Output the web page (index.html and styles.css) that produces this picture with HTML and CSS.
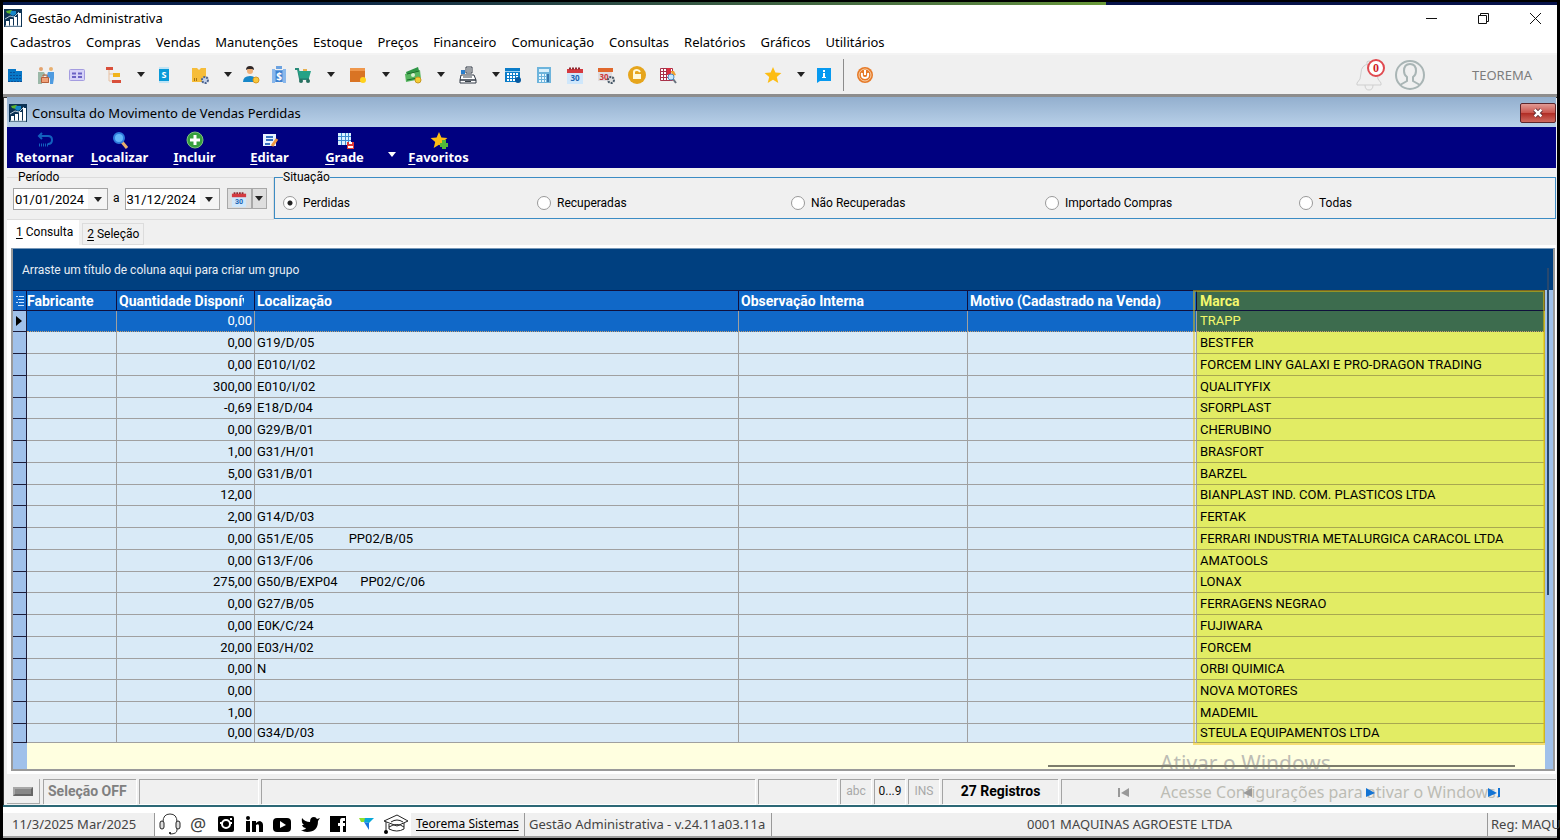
FILE: index.html
```
<!DOCTYPE html>
<html lang="pt-BR">
  <head>
    <meta charset="UTF-8" />
    <meta name="viewport" content="width=device-width, initial-scale=1.0" />
    <title>Gestão Administrativa</title>
    <link rel="stylesheet" href="styles.css">
  </head>
  <body>
    <svg class="defs" aria-hidden="true">
      <symbol id="logo" viewBox="0 0 18 18">
        <path fill="#0d3354" d="M0 0h18v18H0z"/>
        <path fill="#5db52d" d="M2 2l5-1 3 2-3 2-4-1z"/>
        <path fill="#1687c8" d="M7 2h5v3l-3 2-3-2z"/>
        <path fill="#fff" d="M2 12h3v5H2zM6 10h3v7H6zM10 8h3v9h-3zM14 4h3v13h-3z"/>
        <path fill="none" stroke="#b8cad8" d="M1 10l5-3 4 1 5-5M1 17h16"/>
      </symbol>
      <symbol id="calendar" viewBox="0 0 18 18">
        <path fill="#cfe7fb" d="M1 4h16v14H1z"/>
        <path fill="#d43a40" d="M1 3h16v4H1z"/>
        <path stroke="#8e2b32" stroke-width="2" stroke-dasharray="2 1" d="M3 2.500h12"/>
        <text x="9" y="15" text-anchor="middle" font-size="8" font-weight="700" fill="#1c64b4">30</text>
      </symbol>
      <symbol id="star" viewBox="0 0 18 18">
        <path fill="#fdbd14" d="M9 1l2.400 5.600 6 .5-4.600 4 1.500 6L9 13.800 3.700 17l1.500-5.900-4.600-4 6-.5z"/>
      </symbol>
    </svg>

    <div class="app">
      <header class="title-bar">
        <svg class="logo"><use href="#logo"/></svg>
        <h1>Gestão Administrativa</h1>
        <div class="window-buttons">
          <button type="button" aria-label="Minimizar"><svg viewBox="0 0 13 13"><path d="M1 6.500h11"/></svg></button>
          <button type="button" aria-label="Restaurar"><svg viewBox="0 0 13 13"><path d="M1.500 3.500h8v8h-8zM3.500 3.500v-2h8v8h-2"/></svg></button>
          <button type="button" aria-label="Fechar"><svg viewBox="0 0 13 13"><path d="M1 1l11 11M12 1L1 12"/></svg></button>
        </div>
      </header>

      <nav class="menu">
        <a href="#">Cadastros</a>
        <a href="#">Compras</a>
        <a href="#">Vendas</a>
        <a href="#">Manutenções</a>
        <a href="#">Estoque</a>
        <a href="#">Preços</a>
        <a href="#">Financeiro</a>
        <a href="#">Comunicação</a>
        <a href="#">Consultas</a>
        <a href="#">Relatórios</a>
        <a href="#">Gráficos</a>
        <a href="#">Utilitários</a>
      </nav>

      <div class="toolbar">
        <button type="button" class="tool" aria-label="Empresas">
          <svg viewBox="0 0 18 18"><path fill="#0878c8" d="M2 3h8v2h6v11H2z"/><path stroke="#0b4f96" stroke-dasharray="2 1" d="M4 6.500h5M4 9.500h11M4 12.500h11M2 15.500h14"/></svg>
        </button>
        <button type="button" class="tool" aria-label="Clientes">
          <svg viewBox="0 0 18 18"><circle cx="4" cy="3" r="2" fill="#e3a36f"/><circle cx="14" cy="3" r="2" fill="#e8b070"/><path fill="#9bb8a8" d="M1 6h6l2 4H5v8H1z"/><path fill="#4f9be0" d="M11 6h6v6l-1 6h-3v-6l-3 1V9z"/><path fill="#f0a078" d="M4 11h8v6H4z"/><path fill="none" stroke="#b4603c" d="M6 11V9h4v2M4.500 11.500h7v5h-7z"/></svg>
        </button>
        <button type="button" class="tool gap-large" aria-label="Contatos">
          <svg viewBox="0 0 18 18"><rect x="1.500" y="3.500" width="15" height="11" rx="1" fill="#d6d2f8" stroke="#a49ce0"/><path stroke="#6b62c4" stroke-width="2" d="M4 7.500h4M10 7.500h4M4 11h4M10 11h4"/></svg>
        </button>
        <button type="button" class="tool tool-menu gap-small" aria-label="Organograma">
          <svg viewBox="0 0 18 18"><path fill="none" stroke="#e8c0a0" d="M5 4v11h5M5 8h4"/><path fill="#d94f3a" d="M2 1h7v3H2zM8 14h9v3H8z"/><path fill="#f0b41c" d="M9 7h7v4H9z"/></svg><i class="arrow"></i>
        </button>
        <button type="button" class="tool gap-large" aria-label="Serviços">
          <svg viewBox="0 0 18 18"><path fill="#0a9ad8" d="M4 1h10v16H4z"/><path fill="#bfe4f6" d="M4 1h10v2H4zM4 15h10v2H4z"/><text x="9" y="12" text-anchor="middle" font-size="9" font-weight="700" fill="#fff">S</text></svg>
        </button>
        <button type="button" class="tool tool-menu gap-small" aria-label="Produtos">
          <svg viewBox="0 0 18 18"><path fill="#f6bd3a" d="M1 2h5l2 2 2-2h5v14H1z"/><path fill="#a67412" d="M3 12h1v3H3zM5 12h1v3H5z"/><circle cx="14" cy="14" r="3" fill="#c6d4ec" stroke="#4c6490" stroke-width="2" stroke-dasharray="2 1"/></svg><i class="arrow"></i>
        </button>
        <button type="button" class="tool gap-medium" aria-label="Vendedores">
          <svg viewBox="0 0 18 18"><circle cx="8" cy="5" r="3" fill="#f0b078"/><path fill="#302828" d="M4 4q0-4 4-4t4 4l-2-1H6z"/><path fill="#1787c8" d="M1 16q0-6 7-6 5 0 6 4v2z"/><circle cx="14" cy="14" r="3" fill="#f8c83c" stroke="#d89820"/></svg>
        </button>
        <button type="button" class="tool gap-small" aria-label="Contas">
          <svg viewBox="0 0 18 18"><path fill="#6ba2e0" d="M6 0h6v3H6zM3 4h12v12H3z"/><path fill="#3f82d0" d="M6 5h6v11H6z"/><path fill="#8ab8ec" d="M2 3h3v14H2zM13 3h3v14h-3z"/><text x="9" y="14" text-anchor="middle" font-size="10" font-weight="700" fill="#fff">$</text></svg>
        </button>
        <button type="button" class="tool tool-menu gap-medium" aria-label="Vendas">
          <svg viewBox="0 0 18 18"><path fill="none" stroke="#278a78" stroke-width="2" d="M1 3h3l2 10h9"/><path fill="#26a286" d="M4 5h13l-2 7H6z"/><path stroke="#e8b050" stroke-width="2" d="M9 4h4"/><circle cx="7" cy="15" r="2" fill="#277060"/><circle cx="14" cy="15" r="2" fill="#277060"/></svg><i class="arrow"></i>
        </button>
        <button type="button" class="tool tool-menu gap-medium" aria-label="Estoque">
          <svg viewBox="0 0 18 18"><path fill="#d97424" d="M1 2h15v14H1z"/><path fill="#ef974c" d="M1 2h15v3H1z"/><circle cx="14" cy="14" r="3" fill="#ffd21e"/></svg><i class="arrow"></i>
        </button>
        <button type="button" class="tool tool-menu gap-medium" aria-label="Financeiro">
          <svg viewBox="0 0 18 18"><path fill="#2f9646" d="M2 6l12-5 2 7-12 5z"/><path fill="#56b65e" d="M1 8l15-4 1 9-15 3z"/><circle cx="9" cy="9" r="2" fill="#d8f0d0"/><path stroke="#18692a" d="M3 8l12-3M3 14l11-2"/><circle cx="14" cy="14" r="3" fill="#f4cc34" stroke="#c89820"/></svg><i class="arrow"></i>
        </button>
        <button type="button" class="tool tool-menu" aria-label="Caixa">
          <svg viewBox="0 0 18 18"><path fill="#fff" stroke="#303844" d="M7 1h6v6H7zM2 9h13l2 5H1zM1 14h16v3H1z"/><path fill="#2a7ecc" d="M2 4h4v4H2z"/><path stroke="#384048" d="M8 3h4M8 5h4M4 11h9M6 15.500h6"/></svg><i class="arrow"></i>
        </button>
        <button type="button" class="tool" aria-label="Agenda">
          <svg viewBox="0 0 18 18"><path fill="#0a7cc8" d="M1 2h15v14H1z"/><path stroke="#fff" stroke-width="2" stroke-dasharray="2 1" d="M3 8h12M3 11h12M3 14h8"/><path stroke="#9cd0f0" d="M1 5.500h15"/><circle cx="14" cy="14" r="3" fill="#075aa0"/></svg>
        </button>
        <button type="button" class="tool" aria-label="Calculadora">
          <svg viewBox="0 0 18 18"><path fill="#6db4dc" d="M2 1h14v16H2z"/><path fill="#d8f0fc" d="M4 3h10v3H4z"/><path stroke="#e6f6ff" stroke-width="2" stroke-dasharray="2 1" d="M4 9h7M4 12h7M4 15h7"/><path fill="#3474ac" d="M12 8h2v8h-2z"/></svg>
        </button>
        <button type="button" class="tool" aria-label="Calendário"><svg><use href="#calendar"/></svg></button>
        <button type="button" class="tool" aria-label="Configurar calendário">
          <svg viewBox="0 0 18 18"><path fill="#e0dce0" d="M1 3h14v12H1z"/><path fill="#e0682c" d="M1 2h15v4H1z"/><text x="7" y="14" text-anchor="middle" font-size="8" font-weight="700" fill="#cc3838">30</text><circle cx="14" cy="14" r="3" fill="#ddd" stroke="#465868" stroke-width="2" stroke-dasharray="2 1"/></svg>
        </button>
        <button type="button" class="tool" aria-label="Bloquear">
          <svg viewBox="0 0 18 18"><circle cx="9" cy="9" r="9" fill="#e6a51c"/><path fill="#fff8d8" d="M5 8h8v5H5z"/><path fill="none" stroke="#fff8d8" stroke-width="2" d="M6 8V6q0-2 3-2 2 0 3 2"/></svg>
        </button>
        <button type="button" class="tool" aria-label="Pesquisar tabela">
          <svg viewBox="0 0 18 18"><path fill="#fff" stroke="#a8324a" d="M1.500 2.500h12v12h-12zM4.500 2v12M7.500 2v12M10.500 2v12M1 5.500h12M1 8.500h12M1 11.500h12"/><path fill="#d82e40" d="M8 2h4v7H8z"/><path fill="#f0a030" d="M12 5h3l2 4-4 1z"/><path stroke="#68727e" stroke-width="2" d="M14 13l3 4"/><circle cx="12" cy="11" r="3" fill="#c8e8ff" stroke="#488ac0"/></svg>
        </button>
        <button type="button" class="tool tool-menu gap-small favorites" aria-label="Favoritos"><svg><use href="#star"/></svg><i class="arrow"></i></button>
        <button type="button" class="tool gap-medium" aria-label="Informações">
          <svg viewBox="0 0 18 18"><path fill="#079af0" d="M2 2h14v13H5l-3 2z"/><path fill="#fff" d="M8 4h2v2H8zM8 7h2v4h1v1H7v-1h1z"/></svg>
        </button>
        <span class="separator"></span>
        <button type="button" class="tool" aria-label="Sair">
          <svg viewBox="0 0 18 18"><circle cx="9" cy="9" r="8" fill="#e67a28"/><circle cx="9" cy="9" r="6" fill="none" stroke="#f8d0a8"/><path fill="none" stroke="#fff" stroke-width="2" d="M6 7q-1 5 3 5t3-5M9 4v5"/></svg>
        </button>

        <div class="user">
          <button type="button" class="bell" aria-label="Notificações">
            <svg viewBox="0 0 28 32"><path d="M2 24q4-3 4-10 0-8 8-9 8 1 8 9 0 7 4 10v2H2zM12 5q-1-3 2-3t2 3M10 26q0 5 4 5t4-5"/></svg>
            <span class="badge">0</span>
          </button>
          <svg class="avatar" viewBox="0 0 32 32"><circle cx="16" cy="16" r="14"/><path d="M6 26l7-4v-4q-3-2-3-6 0-7 6-7t6 7q0 4-3 6v4l7 4"/></svg>
          <span>TEOREMA</span>
        </div>
      </div>

      <main class="window">
        <div class="window-title">
          <svg class="logo"><use href="#logo"/></svg>
          <h2>Consulta do Movimento de Vendas Perdidas</h2>
          <button type="button" class="close-btn" aria-label="Fechar consulta"><svg viewBox="0 0 12 12"><path stroke="#5c3038" stroke-width="5" d="M2 2l8 8M10 2l-8 8"/><path stroke="#fff" stroke-width="3" d="M2 2l8 8M10 2l-8 8"/></svg></button>
        </div>

        <div class="actions">
          <button type="button"><svg viewBox="0 0 18 18"><path fill="none" stroke="#1261be" stroke-width="2" d="M6 2L3 5l3 3M3 5h9q4 0 4 4t-4 4"/><path stroke="#1261be" stroke-width="3" stroke-dasharray="1 1" d="M3 14h10"/></svg>Retornar</button>
          <button type="button"><svg viewBox="0 0 18 18"><path stroke="#e8b06c" stroke-width="3" d="M11 11l5 6"/><circle cx="8" cy="7" r="5" fill="#62b6fa" stroke="#2d7bdc" stroke-width="2"/></svg><span><u>L</u>ocalizar</span></button>
          <button type="button"><svg viewBox="0 0 18 18"><circle cx="9" cy="9" r="8" fill="#36a03c" stroke="#7fc080"/><path stroke="#fff" stroke-width="3" d="M9 4v10M4 9h10"/></svg><span><u>I</u>ncluir</span></button>
          <button type="button"><svg viewBox="0 0 18 18"><path fill="#e8f2ff" d="M2 3h13v12H2z"/><path stroke="#3670c0" stroke-width="2" d="M5 6h7M5 9h7M4 13h5"/><path stroke="#f09a40" stroke-width="3" d="M16 8l-5 7"/></svg><span><u>E</u>ditar</span></button>
          <button type="button"><svg viewBox="0 0 18 18"><path fill="#d9f0ff" d="M2 2h13v12H2z"/><path stroke="#3c8ad0" d="M2 5.500h13M2 9.500h13M5.500 2v12M9.500 2v12M12.500 2v12"/><path fill="#e03a36" d="M11 11h7v7h-7z"/><path fill="#fff" d="M13 11h3v2h-3zM12 15h5v2h-5z"/></svg><span><u>G</u>rade</span></button>
          <button type="button" class="more" aria-label="Mais opções de grade"><i class="arrow"></i></button>
          <button type="button"><svg viewBox="0 0 18 18"><use href="#star"/><path stroke="#53b838" stroke-width="4" d="M14 9v9M10 14h8"/></svg><span><u>F</u>avoritos</span></button>
        </div>

        <form class="filters">
          <fieldset class="period">
            <legend>Período</legend>
            <span class="date"><input type="text" value="01/01/2024" aria-label="Data inicial"><button type="button" aria-label="Abrir data inicial"><i class="arrow"></i></button></span>
            <span>a</span>
            <span class="date"><input type="text" value="31/12/2024" aria-label="Data final"><button type="button" aria-label="Abrir data final"><i class="arrow"></i></button></span>
            <span class="calendar-btn"><button type="button" aria-label="Calendário"><svg><use href="#calendar"/></svg></button><button type="button" aria-label="Opções de período"><i class="arrow"></i></button></span>
          </fieldset>
          <fieldset class="status">
            <legend>Situação</legend>
            <label><input type="radio" name="status" checked>Perdidas</label>
            <label><input type="radio" name="status">Recuperadas</label>
            <label><input type="radio" name="status">Não Recuperadas</label>
            <label><input type="radio" name="status">Importado Compras</label>
            <label><input type="radio" name="status">Todas</label>
          </fieldset>
        </form>

        <div class="tabs">
          <button type="button" class="tab tab-active"><u>1</u> Consulta</button>
          <button type="button" class="tab"><u>2</u> Seleção</button>
        </div>

        <section class="panel">
          <div class="grid">
            <div class="group-box">Arraste um título de coluna aqui para criar um grupo</div>
            <div class="grid-body">
              <div class="table-wrap">
                <table>
                  <colgroup>
                    <col class="col-mark"><col class="col-maker"><col class="col-qty"><col><col class="col-note"><col class="col-note"><col class="col-brand">
                  </colgroup>
                  <thead>
                    <tr>
                      <th aria-label="Linha"><svg viewBox="0 0 8 12"><path d="M0 1.500h2M3 1.500h5M2 4.500h6M0 7.500h2M3 7.500h5M2 10.500h6"/></svg></th>
                      <th>Fabricante</th><th><div class="clip">Quantidade Disponível</div></th><th>Localização</th><th>Observação Interna</th><th>Motivo (Cadastrado na Venda)</th><th>Marca</th>
                    </tr>
                  </thead>
                  <tbody>
                    <tr class="selected"><td><i class="pointer"></i></td><td></td><td>0,00</td><td></td><td></td><td></td><td>TRAPP</td></tr>
                    <tr><td></td><td></td><td>0,00</td><td>G19/D/05</td><td></td><td></td><td>BESTFER</td></tr>
                    <tr><td></td><td></td><td>0,00</td><td>E010/I/02</td><td></td><td></td><td>FORCEM LINY GALAXI E PRO-DRAGON TRADING</td></tr>
                    <tr><td></td><td></td><td>300,00</td><td>E010/I/02</td><td></td><td></td><td>QUALITYFIX</td></tr>
                    <tr><td></td><td></td><td>-0,69</td><td>E18/D/04</td><td></td><td></td><td>SFORPLAST</td></tr>
                    <tr><td></td><td></td><td>0,00</td><td>G29/B/01</td><td></td><td></td><td>CHERUBINO</td></tr>
                    <tr><td></td><td></td><td>1,00</td><td>G31/H/01</td><td></td><td></td><td>BRASFORT</td></tr>
                    <tr><td></td><td></td><td>5,00</td><td>G31/B/01</td><td></td><td></td><td>BARZEL</td></tr>
                    <tr><td></td><td></td><td>12,00</td><td></td><td></td><td></td><td>BIANPLAST IND. COM. PLASTICOS LTDA</td></tr>
                    <tr><td></td><td></td><td>2,00</td><td>G14/D/03</td><td></td><td></td><td>FERTAK</td></tr>
                    <tr><td></td><td></td><td>0,00</td><td>G51/E/05           PP02/B/05</td><td></td><td></td><td>FERRARI INDUSTRIA METALURGICA CARACOL LTDA</td></tr>
                    <tr><td></td><td></td><td>0,00</td><td>G13/F/06</td><td></td><td></td><td>AMATOOLS</td></tr>
                    <tr><td></td><td></td><td>275,00</td><td>G50/B/EXP04       PP02/C/06</td><td></td><td></td><td>LONAX</td></tr>
                    <tr><td></td><td></td><td>0,00</td><td>G27/B/05</td><td></td><td></td><td>FERRAGENS NEGRAO</td></tr>
                    <tr><td></td><td></td><td>0,00</td><td>E0K/C/24</td><td></td><td></td><td>FUJIWARA</td></tr>
                    <tr><td></td><td></td><td>20,00</td><td>E03/H/02</td><td></td><td></td><td>FORCEM</td></tr>
                    <tr><td></td><td></td><td>0,00</td><td>N</td><td></td><td></td><td>ORBI QUIMICA</td></tr>
                    <tr><td></td><td></td><td>0,00</td><td></td><td></td><td></td><td>NOVA MOTORES</td></tr>
                    <tr><td></td><td></td><td>1,00</td><td></td><td></td><td></td><td>MADEMIL</td></tr>
                    <tr><td></td><td></td><td>0,00</td><td>G34/D/03</td><td></td><td></td><td>STEULA EQUIPAMENTOS LTDA</td></tr>
                  </tbody>
                </table>
                <div class="highlight"></div>
              </div>
              <div class="grid-footer"><span class="watermark">Ativar o Windows</span></div>
              <span class="scroll-v"></span>
              <span class="scroll-h"></span>
            </div>
          </div>
        </section>

        <div class="status-bar">
          <span class="key"><i></i></span>
          <span class="cell selection">Seleção OFF</span>
          <span class="cell cell-medium"></span>
          <span class="cell cell-wide"></span>
          <span class="cell cell-small"></span>
          <span class="cell mode">abc</span>
          <span class="cell mode mode-on">0...9</span>
          <span class="cell mode">INS</span>
          <span class="cell count">27 Registros</span>
          <div class="cell navigator">
            <span class="watermark">Acesse Configurações para ativar o Windows.</span>
            <button type="button" aria-label="Primeiro"><svg viewBox="0 0 13 9"><path d="M1 0h2v9H1zM12 0v9L4 5z"/></svg></button>
            <button type="button" aria-label="Anterior"><svg viewBox="0 0 13 9"><path d="M11 0v9L2 5z"/></svg></button>
            <button type="button" class="enabled" aria-label="Próximo"><svg viewBox="0 0 13 9"><path d="M2 0v9l9-4z"/></svg></button>
            <button type="button" class="enabled" aria-label="Último"><svg viewBox="0 0 13 9"><path d="M0 0v9l9-4zM10 0h2v9h-2z"/></svg></button>
          </div>
        </div>
      </main>

      <footer class="bottom-bar">
        <span class="today">11/3/2025 Mar/2025</span>
        <div class="social">
          <a href="#" aria-label="Suporte"><svg viewBox="0 0 22 22"><path fill="none" stroke="#333" d="M4 9q0-8 7-8t7 8v8q0 4-7 4"/><rect x="1" y="8" width="4" height="8" rx="2" fill="#ddd" stroke="#222"/><rect x="17" y="8" width="4" height="8" rx="2" fill="#ddd" stroke="#222"/><circle cx="11" cy="20" r="1"/></svg></a>
          <a href="#" class="at" aria-label="E-mail">@</a>
          <a href="#" aria-label="Instagram"><svg viewBox="0 0 22 22"><rect x="3" y="3" width="16" height="16" rx="2"/><path fill="#fff" d="M15 5h2v2h-2zM5 9h3v2H5zM14 9h3v2h-3z"/><circle cx="11" cy="11" r="4" stroke="#fff" stroke-width="2"/></svg></a>
          <a href="#" aria-label="LinkedIn"><svg viewBox="0 0 22 22"><circle cx="5" cy="5" r="2"/><path d="M3 8h4v11H3zM9 8h4v2q2-2 4-2 3 1 3 4v7h-4v-6q0-3-3-1v7H9z"/></svg></a>
          <a href="#" aria-label="YouTube"><svg viewBox="0 0 22 22"><rect x="2" y="5" width="18" height="14" rx="4"/><path fill="#fff" d="M9 8v7l6-3z"/></svg></a>
          <a href="#" aria-label="Twitter"><svg viewBox="0 0 22 22"><path d="M3 5q3 4 8 4 0-5 4-5 2 0 3 2l3-1-2 3q0 11-11 11-3 0-6-2 4 0 5-2-3 0-4-3h2Q2 10 3 5z"/></svg></a>
          <a href="#" aria-label="Facebook"><svg viewBox="0 0 22 22"><path d="M3 3h16v16h-3v-6h2v-3h-2V8h2V5h-3q-2 0-2 3v2h-2v3h2v6H3z"/></svg></a>
          <a href="#" aria-label="Teorema"><svg viewBox="0 0 22 22"><path fill="#8fe02c" d="M4 5h8l-3 4H6z"/><path fill="#08a8d8" d="M10 5h9l-5 5-5-1z"/><path fill="#1673e0" d="M9 9l5 1v7z"/></svg></a>
          <a href="#" class="cap" aria-label="Cursos"><svg viewBox="0 0 26 22"><path fill="none" stroke="#222" d="M1 8l13-6 11 6-11 5zM6 11v5q8 4 15 0v-6M3 9v9M8 9q6-4 12 0M6 14q8-5 15 0"/><circle cx="3" cy="19" r="2"/></svg></a>
        </div>
        <a href="#" class="company">Teorema Sistemas</a>
        <span class="version">Gestão Administrativa - v.24.11a03.11a</span>
        <span class="store">0001 MAQUINAS AGROESTE LTDA</span>
        <span class="reg">Reg: MAQU</span>
      </footer>
    </div>
  </body>
</html>
```
FILE: styles.css
```
* {
  box-sizing: border-box;
}
body {
  margin: 0;
  background-color: #000;
  color: #000;
  font-family: "Noto Sans", sans-serif;
  font-size: 13px;
}
button {
  padding: 0;
  border: 0;
  background: none;
  color: inherit;
  font: inherit;
}
h1, h2 {
  margin: 0;
  font-size: 13px;
  font-weight: 400;
}
a {
  color: inherit;
  text-decoration: none;
}
u {
  text-underline-offset: 2px;
}
svg {
  display: block;
}
.defs {
  display: none;
}
.arrow {
  border-top: 5px solid #222;
  border-left: 4px solid transparent;
  border-right: 4px solid transparent;
}
.logo {
  width: 18px;
  height: 18px;
}

.app {
  display: flex;
  flex-direction: column;
  min-height: 100vh;
  padding-top: 3px;
  border: solid #000;
  border-width: 2px 3px 3px;
  background: linear-gradient(90deg, #05184c, #0a2448 20%, #5a8440 65%, #6a9a38 71%, #06124a 71%) top / 100% 3px no-repeat #f0f0f0;
}

/* title and menu */
.title-bar {
  display: flex;
  align-items: center;
  gap: 6px;
  height: 26px;
  padding-left: 1px;
  background-color: #fff;
}
.window-buttons {
  display: flex;
  gap: 39px;
  margin-left: auto;
  padding-right: 15px;
}
.window-buttons svg {
  width: 13px;
  height: 13px;
  fill: none;
  stroke: #111;
}
.menu {
  display: flex;
  gap: 15px;
  height: 24px;
  padding: 2px 7px 0;
  border-bottom: 2px solid #f4f4f4;
  background-color: #fff;
}

.toolbar {
  display: flex;
  align-items: center;
  height: 39px;
  padding-left: 3px;
}
.tool {
  flex: none;
  width: 18px;
  margin-right: 13px;
}
.tool svg {
  width: 18px;
  height: 18px;
}
.tool-menu {
  display: flex;
  align-items: center;
  gap: 15px;
  width: 45px;
  margin-right: 0;
}
.gap-small {
  margin-right: 6px;
}
.gap-medium {
  margin-right: 10px;
}
.gap-large {
  margin-right: 18px;
}
.favorites {
  margin-left: 74px;
}
.separator {
  width: 1px;
  height: 32px;
  margin-right: 12px;
  background-color: #8c8c8c;
}
.user {
  display: flex;
  align-items: center;
  gap: 11px;
  margin-left: auto;
  padding-right: 25px;
  color: #7c7c7c;
}
.user svg {
  width: 28px;
  height: 32px;
  fill: none;
  stroke: #cfcfcf;
}
.user .avatar {
  width: 32px;
  margin-right: 35px;
  stroke: #a9b5b5;
  stroke-width: 2px;
}
.bell {
  position: relative;
}
.badge {
  position: absolute;
  top: 0;
  right: -2px;
  width: 18px;
  height: 18px;
  border: 2px solid #e04a50;
  border-radius: 50%;
  background-color: #fff;
  color: #d01c28;
  font: 700 12px/14px "Liberation Serif", serif;
}

/* inner window */
.window {
  display: flex;
  flex: 1;
  flex-direction: column;
  padding: 0 1px 0 4px;
  border-top: 3px solid #8d8d8d;
  border-bottom: 2px solid #2c6876;
  box-shadow: inset 1px 1px #333;
  background-color: #f0f0f0;
  font-family: Roboto, sans-serif;
}
.window-title {
  display: flex;
  align-items: center;
  gap: 5px;
  height: 30px;
  padding: 2px 0 0 2px;
  background: linear-gradient(#93afce, #b9d1e9);
  font-family: "Noto Sans", sans-serif;
}
.close-btn {
  display: flex;
  align-items: center;
  justify-content: center;
  width: 36px;
  height: 20px;
  margin-left: auto;
  border: 1px solid #5c262c;
  border-radius: 2px;
  background: linear-gradient(#e29a94, #c9544c 50%, #b02c24 51%, #cf6a60);
}
.close-btn svg {
  width: 12px;
  height: 10px;
}

.actions {
  display: flex;
  height: 41px;
  background-color: #000080;
  color: #fff;
  font: 700 13px/16px "Noto Sans", sans-serif;
}
.actions button {
  display: flex;
  flex-direction: column;
  align-items: center;
  width: 75px;
  padding-top: 4px;
}
.actions svg {
  width: 18px;
  height: 18px;
}
.actions .more {
  width: 19px;
  padding-top: 25px;
}
.more .arrow {
  border-top-color: #fff;
}

.filters {
  display: flex;
  height: 52px;
  padding-top: 1px;
  font-size: 12px;
}
fieldset {
  display: flex;
  min-width: 0;
  margin: 0;
  padding: 0;
  border: 1px solid #dcdcdc;
}
legend {
  padding: 0;
  line-height: 16px;
}
.period {
  align-items: flex-start;
  gap: 5px;
  width: 267px;
  padding: 3px 0 0 6px;
  border-left: 0;
}
.period legend {
  margin-left: 5px;
}
.period > span:not(.date) {
  line-height: 20px;
}
.date {
  display: flex;
  width: 95px;
  height: 22px;
  border: 1px solid #a5a5a5;
  background-color: #fff;
}
.date input {
  flex: 1;
  min-width: 0;
  padding: 0 0 0 1px;
  border: 0;
  font: 13px Roboto, sans-serif;
}
.date button,
.calendar-btn button {
  display: flex;
  align-items: center;
  justify-content: center;
  width: 19px;
  background-color: #f4f4f4;
}
.calendar-btn {
  display: flex;
  height: 21px;
  margin-left: 2px;
}
.calendar-btn button {
  width: 15px;
  border: 1px solid #a8a8a8;
  background-color: #dedede;
}
.calendar-btn button:first-child {
  width: 25px;
}
.calendar-btn svg {
  width: 16px;
  height: 16px;
}
.status {
  display: grid;
  flex: 1;
  grid-template-columns: repeat(5, 1fr);
  align-items: center;
  height: 50px;
  padding: 2px 2px 0 8px;
  border-color: #3c8cc4;
}
.status label {
  display: flex;
  align-items: center;
  gap: 6px;
}
.status input {
  appearance: none;
  width: 14px;
  height: 14px;
  margin: 0;
  border: 1px solid #999;
  border-radius: 50%;
  background-color: #fff;
}
.status input:checked {
  background-image: radial-gradient(#222 2px, transparent 3px);
}

.tabs {
  display: flex;
  align-items: flex-end;
  gap: 3px;
  height: 25px;
  font-size: 12px;
}
.tab {
  height: 22px;
  padding: 0 4px;
  border: 1px solid #dcdcdc;
}
.tab-active {
  height: 25px;
  padding: 0 6px 2px 9px;
  border: 0;
  background-color: #fff;
}

/* grid */
.panel {
  display: flex;
  flex: 1;
  padding: 3px 1px 3px 4px;
  background-color: #fff;
}
.grid {
  display: flex;
  flex: 1;
  flex-direction: column;
  border: 2px solid #9a9a9a;
  border-top: 1px solid #7898b8;
}
.group-box {
  height: 41px;
  padding-left: 9px;
  background-color: #004080;
  color: #e8eef4;
  font-size: 12px;
  line-height: 42px;
}
.grid-body {
  position: relative;
  display: flex;
  flex: 1;
  flex-direction: column;
  padding-right: 8px;
  background-color: #a0c1ea;
}
.table-wrap {
  position: relative;
}
table {
  width: 100%;
  border-spacing: 0;
  table-layout: fixed;
}
.col-mark {
  width: 14px;
}
.col-maker {
  width: 90px;
}
.col-qty {
  width: 138px;
}
.col-note {
  width: 229px;
}
.col-brand {
  width: 348px;
}
th, td {
  height: 22px;
  padding: 0 2px;
  border: solid #a0a0a0;
  border-width: 0 1px 1px 0;
  background-color: #d9eaf7;
  line-height: 16px;
  text-align: left;
  white-space: pre;
  overflow: hidden;
}
th {
  height: 21px;
  border-color: #10103c;
  border-top-width: 1px;
  background-color: #1068c8;
  color: #fff;
  font-size: 14px;
}
tr:nth-child(4n + 1) td {
  height: 21px;
}
tr:last-child td {
  height: 19px;
}
th:first-child {
  padding: 0 1px 0 3px;
}
th:first-child svg {
  width: 8px;
  height: 12px;
  stroke: #c8e4ff;
}
th:nth-child(2) {
  padding-left: 0;
}
.clip {
  margin-right: 8px;
  overflow: hidden;
}
td:first-child {
  padding: 0 3px;
  border-color: #1c1c38;
  background-color: #a0c1ea;
}
td:nth-child(3) {
  text-align: right;
}
th:last-child,
td:last-child {
  padding-left: 3px;
}
th:last-child,
.selected td:last-child {
  background-color: #3d6c4e;
  color: #f4f86c;
}
td:last-child {
  border-color: #a8a850;
  background-color: #e2ec64;
}
.selected td:not(:first-child):not(:last-child) {
  background-color: #1068c8;
  color: #fff;
}
.selected td:not(:first-child) {
  border-bottom: 1px dotted #c8a070;
}
.pointer {
  display: block;
  width: 6px;
  border-left: 6px solid #000;
  border-top: 5px solid transparent;
  border-bottom: 5px solid transparent;
}
.highlight {
  position: absolute;
  top: 0;
  right: 0;
  bottom: -2px;
  width: 352px;
  border: 2px solid rgba(236, 190, 0, .5);
}
.grid-footer {
  flex: 1;
  margin-left: 14px;
  background-color: #ffffe0;
}
.watermark {
  color: #bcbcb4;
  white-space: nowrap;
}
.grid-footer .watermark {
  display: block;
  width: 385px;
  height: 26px;
  margin-left: auto;
  padding-top: 6px;
  font: 21px/28px "Noto Sans", sans-serif;
  overflow: hidden;
}
.scroll-v {
  position: absolute;
  top: -22px;
  right: 4px;
  width: 2px;
  height: 327px;
  background-color: #28486e;
}
.scroll-h {
  position: absolute;
  right: 38px;
  bottom: 2px;
  width: 467px;
  height: 2px;
  background-color: #7c7c6c;
}

/* record status */
.status-bar {
  display: flex;
  gap: 3px;
  height: 31px;
  padding: 5px 0 1px;
  font-size: 12px;
  line-height: 23px;
}
.cell {
  border: solid #a4a4a4;
  border-width: 1px 0 0 1px;
  box-shadow: 1px 1px #fff;
}
.key {
  width: 33px;
  padding: 8px 6px;
  border: solid #aaa;
  border-width: 0 1px 1px 0;
}
.key i {
  display: block;
  width: 20px;
  height: 9px;
  border: 2px solid #a8a8a8;
  border-right-color: #666;
  border-bottom-color: #666;
  background-color: #888;
}
.selection {
  width: 93px;
  padding-left: 4px;
  color: #808080;
  font-size: 14px;
  font-weight: 700;
}
.cell-medium {
  width: 119px;
}
.cell-wide {
  flex: 1;
}
.cell-small {
  width: 79px;
}
.mode {
  width: 31px;
  color: #a8a8a8;
  text-align: center;
}
.mode-on {
  color: #111;
}
.count {
  width: 116px;
  font-size: 14px;
  font-weight: 700;
  text-align: center;
}
.navigator {
  position: relative;
  display: flex;
  width: 495px;
  align-items: center;
  justify-content: space-around;
}
.navigator svg {
  width: 13px;
  height: 9px;
  fill: #999;
}
.navigator .enabled svg {
  fill: #1474d4;
}
.navigator button {
  position: relative;
}
.navigator .watermark {
  position: absolute;
  right: 56px;
  font: 16px/22px "Noto Sans", sans-serif;
}

.bottom-bar {
  display: flex;
  height: 31px;
  border-top: 6px solid #fff;
  border-bottom: 2px solid #a0a0a0;
  color: #444;
  line-height: 22px;
  white-space: nowrap;
}
.today {
  width: 152px;
  padding-left: 9px;
  border-right: 1px solid #999;
}
.social {
  display: flex;
  gap: 6px;
  padding: 0 2px 0 4px;
  background-color: #fff;
}
.social svg,
.at {
  width: 22px;
  height: 22px;
}
.at {
  font: 18px/22px "Noto Sans", sans-serif;
  text-align: center;
}
.social .cap svg {
  width: 26px;
}
.company {
  width: 114px;
  padding: 0 5px;
  border-right: 1px solid #999;
  color: #000;
  font-size: 12px;
  text-decoration: underline;
  text-underline-offset: 2px;
}
.version {
  width: 247px;
  padding-left: 4px;
  border-right: 1px solid #999;
}
.store {
  flex: 1;
  text-align: center;
}
.reg {
  width: 70px;
  padding-left: 3px;
  border-left: 1px solid #999;
}
```
